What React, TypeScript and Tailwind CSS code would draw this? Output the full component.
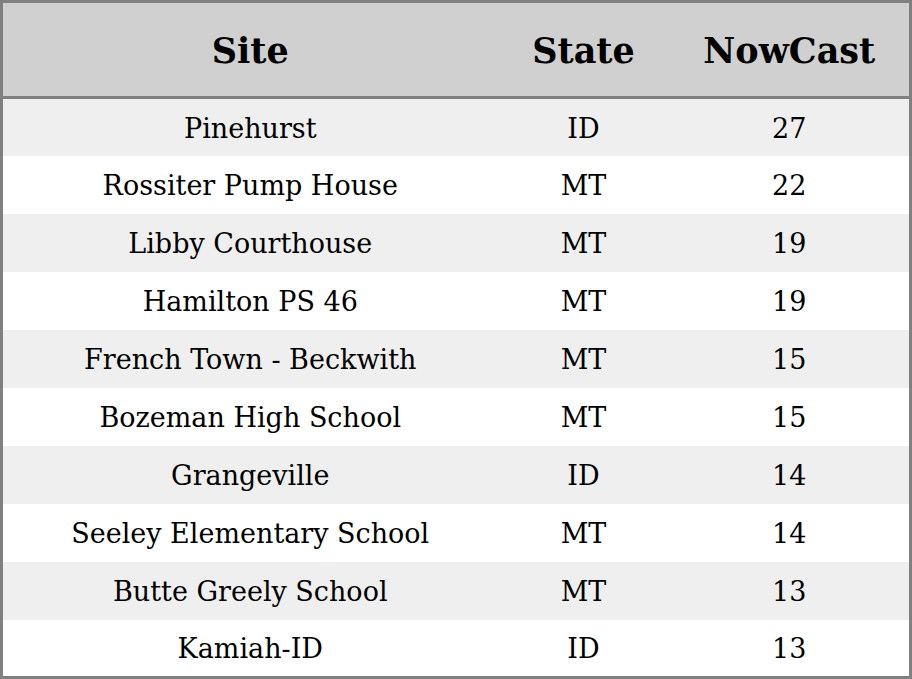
const ROWS = [
  { site: "Pinehurst", state: "ID", nowcast: 27 },
  { site: "Rossiter Pump House", state: "MT", nowcast: 22 },
  { site: "Libby Courthouse", state: "MT", nowcast: 19 },
  { site: "Hamilton PS 46", state: "MT", nowcast: 19 },
  { site: "French Town - Beckwith", state: "MT", nowcast: 15 },
  { site: "Bozeman High School", state: "MT", nowcast: 15 },
  { site: "Grangeville", state: "ID", nowcast: 14 },
  { site: "Seeley Elementary School", state: "MT", nowcast: 14 },
  { site: "Butte Greely School", state: "MT", nowcast: 13 },
  { site: "Kamiah-ID", state: "ID", nowcast: 13 },
];

export default function App() {
  return (
    <div className="w-[912px] h-[679px] bg-white font-['DejaVu_Serif',serif] text-black">
      <table className="w-full border-[3px] border-[#808080] border-collapse table-fixed">
        <colgroup>
          <col className="w-[496px]" />
          <col className="w-[172px]" />
          <col />
        </colgroup>
        <thead>
          <tr className="h-[96px] bg-[#d0d0d0] border-b-[3px] border-[#808080]">
            <th className="pt-[3px] text-[35px] font-bold">Site</th>
            <th className="pt-[3px] text-[35px] font-bold">State</th>
            <th className="pt-[3px] text-[35px] font-bold">NowCast</th>
          </tr>
        </thead>
        <tbody>
          {ROWS.map((r, i) => (
            <tr
              key={r.site}
              className={i % 2 === 0 ? "h-[58px] bg-[#efefef]" : "h-[58px] bg-white"}
            >
              <td className="pt-[3px] text-center text-[27px]">{r.site}</td>
              <td className="pt-[3px] text-center text-[27px]">{r.state}</td>
              <td className="pt-[3px] text-center text-[27px]">{r.nowcast}</td>
            </tr>
          ))}
        </tbody>
      </table>
    </div>
  );
}
